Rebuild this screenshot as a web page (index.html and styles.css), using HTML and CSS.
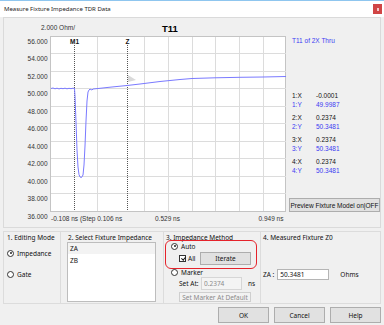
FILE: index.html
```html
<!DOCTYPE html>
<html lang="en">
<head>
  <meta charset="UTF-8">
  <title>Measure Fixture Impedance TDR Data</title>
  <link rel="stylesheet" href="styles.css">
</head>
<body>
  <div class="window">
    <!-- title bar -->
    <div class="titlebar">
      <span class="title">Measure Fixture Impedance TDR Data</span>
      <span class="close"><i></i></span>
    </div>

    <div class="dialog">
      <!-- TDR chart + marker readout -->
      <div class="chart-panel">
        <svg class="chart" width="285" height="209" viewBox="4 18 285 209">
          <rect x="50.5" y="36.5" width="235" height="175" fill="#fff" stroke="#c4c4c4"/>
          <g stroke="#dcdcdc" shape-rendering="crispEdges">
            <line x1="51" y1="53.5" x2="286" y2="53.5"/>
            <line x1="51" y1="71.5" x2="286" y2="71.5"/>
            <line x1="51" y1="88.5" x2="286" y2="88.5"/>
            <line x1="51" y1="106.5" x2="286" y2="106.5"/>
            <line x1="51" y1="123.5" x2="286" y2="123.5"/>
            <line x1="51" y1="141.5" x2="286" y2="141.5"/>
            <line x1="51" y1="158.5" x2="286" y2="158.5"/>
            <line x1="51" y1="176.5" x2="286" y2="176.5"/>
            <line x1="51" y1="193.5" x2="286" y2="193.5"/>
            <line x1="97.5" y1="37" x2="97.5" y2="211"/>
            <line x1="144.5" y1="37" x2="144.5" y2="211"/>
            <line x1="168.5" y1="37" x2="168.5" y2="211"/>
            <line x1="192.5" y1="37" x2="192.5" y2="211"/>
            <line x1="215.5" y1="37" x2="215.5" y2="211"/>
            <line x1="239.5" y1="37" x2="239.5" y2="211"/>
            <line x1="263.5" y1="37" x2="263.5" y2="211"/>
          </g>

          <text class="scale" x="41" y="29.5">2.000 Ohm/</text>
          <text class="name" x="162" y="32">T11</text>

          <g class="ylab" text-anchor="end">
            <text x="47.5" y="43.5">56.000</text>
            <text x="47.5" y="61">54.000</text>
            <text x="47.5" y="78.5">52.000</text>
            <text x="47.5" y="96">50.000</text>
            <text x="47.5" y="113.5">48.000</text>
            <text x="47.5" y="131">46.000</text>
            <text x="47.5" y="148.5">44.000</text>
            <text x="47.5" y="166">42.000</text>
            <text x="47.5" y="183.5">40.000</text>
            <text x="47.5" y="201">38.000</text>
            <text x="47.5" y="218.5">36.000</text>
          </g>
          <g class="xlab">
            <text x="51" y="220.5">-0.108 ns (Step 0.106 ns</text>
            <text x="155" y="220.5">0.529 ns</text>
            <text x="258.5" y="220.5">0.949 ns</text>
          </g>

          <!-- markers -->
          <g stroke="#555" stroke-dasharray="1 1" shape-rendering="crispEdges">
            <line x1="74.5" y1="45" x2="74.5" y2="211"/>
            <line x1="127.5" y1="45" x2="127.5" y2="211"/>
          </g>
          <text class="mk" x="74.5" y="43.5" text-anchor="middle">M1</text>
          <text class="mk" x="127.5" y="43.5" text-anchor="middle">Z</text>
          <polygon points="128,75 136,80 128,82" fill="#dadada"/>

          <polyline fill="none" stroke="#7a7aff" stroke-width="1"
            points="51,88.5 53,88 55,88.8 57,88.2 59,88.9 61,88.3 63,88.7 65,88.2 67,88.8 69,88.3 71,88.7 73,88.2 74.5,88.5 75,96 76,122 77,150 78,167 79,174.5 80,177 81.5,177.5 83,175 84,165 85,146 86,121 87,101 88,92 89,90 90,89 91,89.6 92,90 93,89 95,88.8 100,88.3 110,87.2 120,86.2 127,85.5 140,84 160,81.5 180,79.5 192,78.5 215,77.8 240,77.3 263,77 286,76.5"/>
        </svg>

        <div class="legend">
          <div class="trace-name">T11 of 2X Thru</div>
          <div class="readout">
            <div class="pair"><span>1:X</span><span>-0.0001</span><span class="blue">1:Y</span><span class="blue">49.9987</span></div>
            <div class="pair"><span>2:X</span><span>0.2374</span><span class="blue">2:Y</span><span class="blue">50.3481</span></div>
            <div class="pair"><span>3:X</span><span>0.2374</span><span class="blue">3:Y</span><span class="blue">50.3481</span></div>
            <div class="pair"><span>4:X</span><span>0.2374</span><span class="blue">4:Y</span><span class="blue">50.3481</span></div>
          </div>
          <button class="btn preview">Preview Fixture Model on|OFF</button>
        </div>
      </div>

      <!-- settings groups -->
      <div class="controls">
        <div class="group g1">
          <div class="caption">1. Editing Mode</div>
          <div class="option first"><span class="radio on"></span>Impedance</div>
          <div class="option gate"><span class="radio"></span>Gate</div>
        </div>

        <div class="group g2">
          <div class="caption">2. Select Fixture Impedance</div>
          <div class="listbox">
            <div class="item sel">ZA</div>
            <div class="item">ZB</div>
          </div>
        </div>

        <div class="group g3">
          <div class="caption">3. Impedance Method</div>
          <div class="option"><span class="radio on"></span>Auto</div>
          <div class="auto-row">
            <span class="check"></span>All
            <button class="btn iterate">Iterate</button>
          </div>
          <div class="option marker"><span class="radio"></span>Marker</div>
          <div class="set-row">
            <span class="set-label">Set At:</span>
            <input class="field disabled" type="text" value="0.2374" disabled>
            <span>ns</span>
          </div>
          <button class="btn off default-btn" disabled>Set Marker At Default</button>
          <div class="highlight"></div>
        </div>

        <div class="group g4">
          <div class="caption">4. Measured Fixture Z0</div>
          <div class="z-row">
            <span>ZA :</span>
            <input class="field" type="text" value="50.3481">
            <span class="unit">Ohms</span>
          </div>
        </div>
      </div>

      <div class="actions">
        <button class="btn">OK</button>
        <button class="btn">Cancel</button>
        <button class="btn">Help</button>
      </div>
    </div>
  </div>
</body>
</html>
```

FILE: styles.css
```css
/* dialog frame */
body {
  margin: 0;
  font-family: "Noto Sans", "Liberation Sans", sans-serif;
  font-size: 6.5px;
  color: #111;
}
.window {
  width: 384px;
  height: 325px;
  background: #f0f0f0;
  overflow: hidden;
}
.titlebar {
  height: 17px;
  box-sizing: border-box;
  border-top: 1px solid #8fc6ef;
  background: #fff;
  display: flex;
  align-items: center;
  justify-content: space-between;
  padding: 0 2px 0 4px;
}
.title {
  font-size: 6px;
  color: #222;
}
.close {
  width: 9px;
  height: 10px;
  background: #d04545;
  display: flex;
  align-items: center;
  justify-content: center;
}
.close i {
  width: 2px;
  height: 3px;
  background: #f3c9c9;
}

/* chart area */
.chart-panel {
  margin: 0 3px;
  height: 211px;
  box-sizing: border-box;
  border: 1px solid #dadada;
  display: flex;
}
.chart {
  display: block;
  flex: none;
}
.chart text {
  font-family: "Liberation Sans", Arial, sans-serif;
  font-size: 6.5px;
  fill: #333;
}
.chart .name {
  font-size: 9.5px;
  font-weight: bold;
  fill: #000;
}
.chart .mk {
  font-weight: bold;
  fill: #111;
}
.legend {
  flex: 1;
  display: flex;
  flex-direction: column;
  padding-top: 18px;
  font-family: "Liberation Sans", Arial, sans-serif;
}
.trace-name,
.readout {
  padding-left: 3px;
  line-height: 9px;
}
.trace-name {
  color: #3c3cf2;
}
.readout {
  margin-top: 45.5px;
}
.pair {
  display: grid;
  grid-template-columns: 24px auto;
  margin-bottom: 4px;
}
.blue {
  color: #3c3cf2;
}
.preview {
  margin-top: auto;
  margin-bottom: 15px;
  width: 100%;
  height: 14px;
  font-family: "Liberation Sans", Arial, sans-serif;
}

/* buttons and inputs */
.btn {
  font: inherit;
  font-size: 6.5px;
  color: #111;
  background: #e1e1e1;
  border: 1px solid #adadad;
  padding: 0;
  box-sizing: border-box;
}
.btn.off {
  background: #f2f2f2;
  border-color: #cfcfcf;
  color: #8a8a8a;
}
.field {
  font: inherit;
  box-sizing: border-box;
  border: 1px solid #b5b5b5;
  background: #fff;
  padding: 0 2px;
  color: #111;
}
.field.disabled {
  background: #f4f4f4;
  border-color: #d6d6d6;
  color: #8a8a8a;
}

/* bottom groups */
.controls {
  display: flex;
  margin: 3px 3px 0;
  height: 73px;
}
.group {
  box-sizing: border-box;
  border: 1px solid #dcdcdc;
  padding: 0 2px;
  line-height: 9px;
}
.group + .group {
  margin-left: -1px;
}
.g1 { width: 58px; padding-left: 3px; }
.g2 { width: 104px; padding-left: 6px; }
.g3 { width: 98px; position: relative; }
.g4 { flex: 1; }
.caption {
  margin-top: 0.5px;
}
.g2 .caption {
  padding-left: 1px;
}
.option {
  display: flex;
  align-items: center;
  height: 9px;
}
.g1 .first {
  margin-top: 7px;
}
.g1 .gate {
  margin-top: 12px;
}
.g3 .option {
  padding-left: 5px;
}
.g3 .marker {
  margin-top: 3px;
}
.radio {
  width: 5px;
  height: 5px;
  border: 1px solid #333;
  border-radius: 50%;
  background: #fff;
  margin-right: 3px;
  position: relative;
  box-sizing: content-box;
}
.radio.on::after {
  content: "";
  position: absolute;
  left: 1.5px;
  top: 1.5px;
  width: 2px;
  height: 2px;
  border-radius: 50%;
  background: #222;
}
.listbox {
  margin-top: 0.5px;
  width: 89px;
  height: 60px;
  box-sizing: border-box;
  border: 1px solid #bdbdbd;
  background: #fff;
}
.item {
  line-height: 12px;
  padding-left: 2px;
}
.item.sel {
  background: #f3f3f3;
  line-height: 11px;
  margin-bottom: 1px;
}
.auto-row {
  display: flex;
  align-items: center;
  height: 13px;
  margin-top: 1px;
  padding-left: 13px;
}
.check {
  width: 5px;
  height: 5px;
  border: 1px solid #333;
  background: #fff;
  margin-right: 2px;
  position: relative;
}
.check::after {
  content: "";
  position: absolute;
  left: 1.5px;
  top: 0;
  width: 1.5px;
  height: 3px;
  border: solid #111;
  border-width: 0 1px 1px 0;
  transform: rotate(40deg);
}
.iterate {
  width: 51px;
  height: 13px;
  margin-left: auto;
  margin-right: 7px;
  border-width: 1.5px;
}
.set-row {
  display: flex;
  align-items: center;
  height: 13px;
  padding-left: 13px;
}
.set-label {
  width: 22px;
}
.set-row .field {
  width: 41px;
  height: 13px;
  margin-right: 6px;
}
.default-btn {
  margin: 2px 0 0 13px;
  width: 72px;
  height: 10px;
}
/* red annotation round Auto / Iterate */
.highlight {
  position: absolute;
  left: 1px;
  top: 8px;
  width: 92px;
  height: 29px;
  box-sizing: border-box;
  border: 1px solid #e5232b;
  border-radius: 6px;
}
.z-row {
  display: flex;
  align-items: center;
  margin-top: 27px;
  height: 11px;
}
.z-row .field {
  width: 52px;
  height: 11px;
  margin-left: 3px;
}
.unit {
  margin-left: 11px;
}

/* OK / Cancel / Help */
.actions {
  display: flex;
  justify-content: flex-end;
  gap: 5px;
  margin: 3px 3px 0 0;
}
.actions .btn {
  width: 51px;
  height: 16px;
}
```
